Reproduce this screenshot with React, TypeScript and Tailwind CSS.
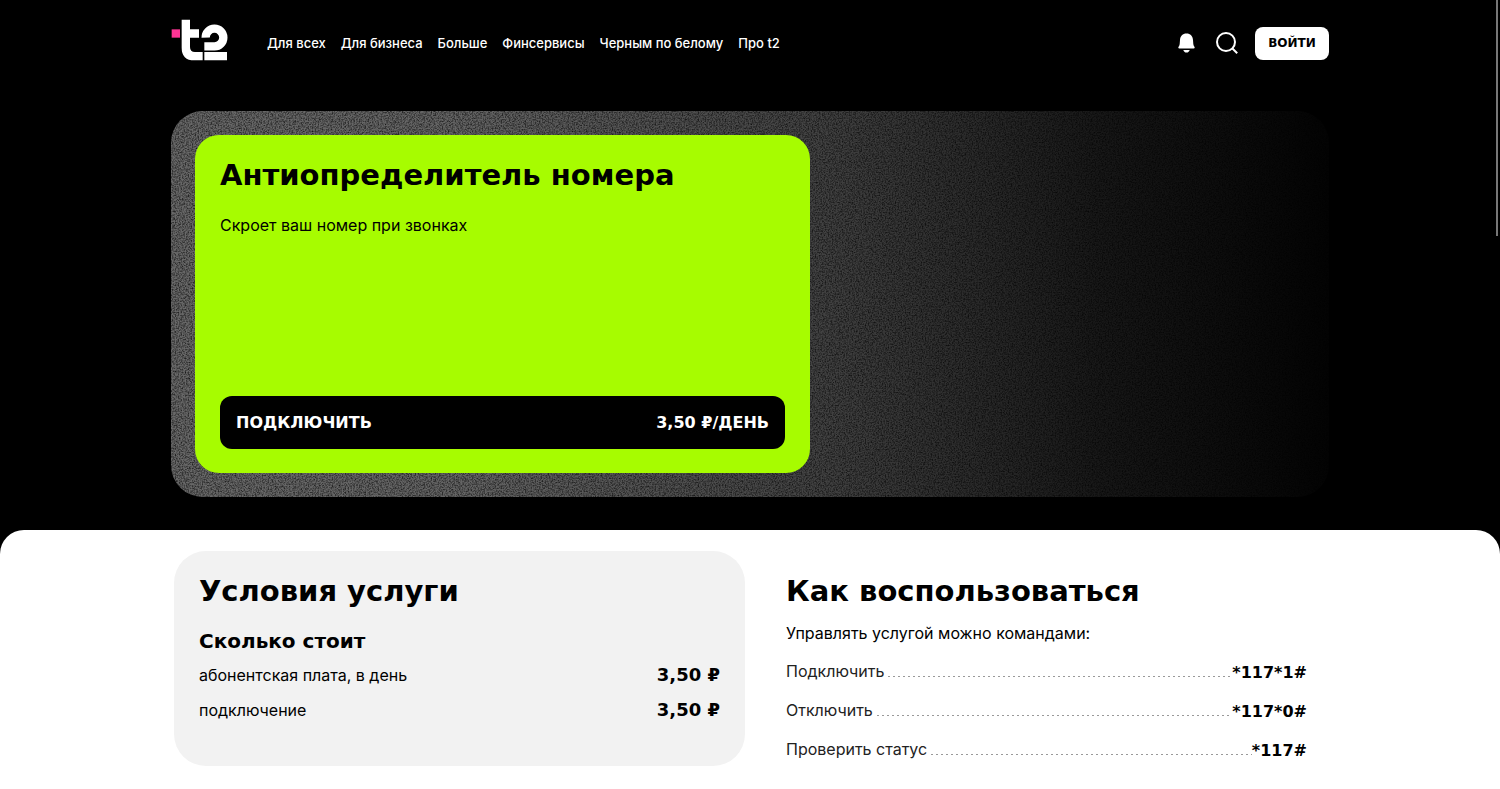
const menu = [
  "Для всех",
  "Для бизнеса",
  "Больше",
  "Финсервисы",
  "Черным по белому",
  "Про t2",
];

const prices = [
  { label: "абонентская плата, в день", value: "3,50 ₽" },
  { label: "подключение", value: "3,50 ₽" },
];

const commands = [
  { label: "Подключить", code: "*117*1#" },
  { label: "Отключить", code: "*117*0#" },
  { label: "Проверить статус", code: "*117#" },
];

function Logo() {
  return (
    <svg viewBox="33 28 171 126" className="h-[42px] w-[57px]">
      <path fill="#ff3495" d="M35 59h25v25H35z" />
      <path
        fill="#fff"
        d="M65 30h25v29h27v25H90v28q0 15 15 15h23v25h-25q-38 0-38-38zM133 127h68v25h-68z"
      />
      <path
        fill="none"
        stroke="#fff"
        strokeWidth="25"
        d="M137 84a26.500 26.500 0 1 1 26.500 26H133"
      />
    </svg>
  );
}

function BellIcon() {
  return (
    <svg viewBox="0 0 24 24" fill="currentColor" className="size-6">
      <path d="M11.500 2.500C7.600 2.500 5.300 5 5 9l-.3 4c-.1 1.200-.5 2-1.100 2.800-.6.900-.3 1.700.7 1.700h14.400c1 0 1.300-.8.7-1.700-.6-.8-1-1.600-1.100-2.800L18 9c-.3-4-2.600-6.500-6.500-6.500z" />
      <path d="M8.300 19h6.400c-.4 1.500-1.500 2.600-3.200 2.600S8.700 20.500 8.300 19z" />
    </svg>
  );
}

function SearchIcon() {
  return (
    <svg
      viewBox="0 0 24 24"
      fill="none"
      stroke="currentColor"
      strokeWidth="2"
      className="size-6"
    >
      <circle cx="11" cy="11" r="9" />
      <path d="m17.200 17.200 5 5" />
    </svg>
  );
}

function Grain() {
  return (
    <svg className="absolute inset-0 h-full w-full" aria-hidden="true">
      <defs>
        <linearGradient id="fade">
          <stop offset="0" stopColor="#686868" />
          <stop offset="0.25" stopColor="#646464" />
          <stop offset="0.56" stopColor="#424242" />
          <stop offset="0.8" stopColor="#181818" />
          <stop offset="1" stopColor="#030303" />
        </linearGradient>
        <filter
          id="grain"
          x="0"
          y="0"
          width="100%"
          height="100%"
          colorInterpolationFilters="sRGB"
        >
          <feTurbulence type="fractalNoise" baseFrequency="0.7" numOctaves="2" seed="4" />
          <feColorMatrix values="0 0 0 0 0  0 0 0 0 0  0 0 0 0 0  1.500 0 0 0 -0.550" />
        </filter>
      </defs>
      <rect width="100%" height="100%" fill="url(#fade)" />
      <rect width="100%" height="100%" filter="url(#grain)" />
    </svg>
  );
}

export default function App() {
  return (
    <div className="min-h-screen bg-black font-['Inter','Liberation_Sans',sans-serif] text-black">
      <div className="fixed top-0 right-[2px] z-10 h-[236px] w-[2px] bg-[#777]" />

      <header className="mx-auto flex h-[87px] max-w-[1158px] items-center text-white">
        <a href="#" aria-label="t2" className="mb-2">
          <Logo />
        </a>
        <nav className="ml-[39px] flex gap-[15px] text-[13px] font-medium whitespace-nowrap">
          {menu.map((item) => (
            <a key={item} href="#">
              {item}
            </a>
          ))}
        </nav>
        <div className="mb-px ml-auto flex items-center gap-4">
          <button type="button" aria-label="Уведомления">
            <BellIcon />
          </button>
          <button type="button" aria-label="Поиск">
            <SearchIcon />
          </button>
          <button
            type="button"
            className="h-[33px] w-[74px] rounded-lg bg-white font-['DejaVu_Sans',sans-serif] text-xs font-bold text-black"
          >
            ВОЙТИ
          </button>
        </div>
      </header>

      <section className="relative mx-auto mt-6 max-w-[1158px] overflow-hidden rounded-[32px] p-6">
        <Grain />
        <div className="relative flex min-h-[338px] max-w-[615px] flex-col rounded-3xl bg-[#a7fc00] px-[25px] py-6">
          <h1 className="font-['DejaVu_Sans',sans-serif] text-[29px] leading-8 font-bold">
            Антиопределитель номера
          </h1>
          <p className="mt-[22px] text-base">Скроет ваш номер при звонках</p>
          <button
            type="button"
            className="mt-auto flex h-[53px] items-center justify-between rounded-xl bg-black px-4 font-['DejaVu_Sans',sans-serif] text-base font-bold text-white"
          >
            <span>ПОДКЛЮЧИТЬ</span>
            <span>3,50 ₽/ДЕНЬ</span>
          </button>
        </div>
      </section>

      <main className="mt-[33px] min-h-[259px] rounded-t-3xl bg-white pt-[21px] pb-[22px]">
        <div className="mx-auto grid max-w-[1152px] grid-cols-2 gap-[10px]">
          <section className="rounded-[32px] bg-[#f2f2f2] px-[25px] pt-6 pb-11">
            <h2 className="font-['DejaVu_Sans',sans-serif] text-[29px] leading-8 font-bold">
              Условия услуги
            </h2>
            <h3 className="mt-[22px] font-['DejaVu_Sans',sans-serif] text-xl leading-6 font-bold">
              Сколько стоит
            </h3>
            <dl className="mt-[10px] flex flex-col gap-[11px]">
              {prices.map((row) => (
                <div key={row.label} className="flex justify-between">
                  <dt>{row.label}</dt>
                  <dd className="font-['DejaVu_Sans',sans-serif] text-lg leading-6 font-bold">
                    {row.value}
                  </dd>
                </div>
              ))}
            </dl>
          </section>

          <section className="pt-6 pr-[19px] pl-[31px]">
            <h2 className="font-['DejaVu_Sans',sans-serif] text-[29px] leading-8 font-bold">
              Как воспользоваться
            </h2>
            <p className="mt-[14px]">Управлять услугой можно командами:</p>
            <dl className="mt-[14px] flex flex-col gap-[13px]">
              {commands.map((row) => (
                <div key={row.code} className="flex">
                  <dt className="text-[#222]">{row.label}</dt>
                  <div className="mb-2 ml-1 h-px flex-1 self-end bg-[repeating-linear-gradient(90deg,#999_0_2px,transparent_2px_5px)]" />
                  <dd className="pt-[2px] font-['DejaVu_Sans',sans-serif] leading-6 font-bold">
                    {row.code}
                  </dd>
                </div>
              ))}
            </dl>
          </section>
        </div>
      </main>
    </div>
  );
}
